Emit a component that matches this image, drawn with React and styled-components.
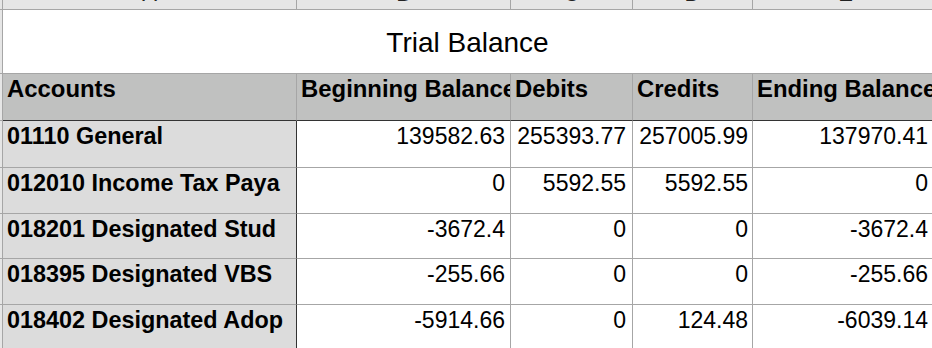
import React from 'react'
import styled, { createGlobalStyle } from 'styled-components'

const GlobalStyle = createGlobalStyle`
  html, body {
    margin: 0;
    padding: 0;
    background: #ffffff;
    overflow: hidden;
  }
  body {
    font-family: "Liberation Sans", Arial, sans-serif;
  }
`

const COLS = '3px 294px 214px 122px 120px 186px'
const GRID = '#a6a6a6'
const DARK = '#333333'

const accounts = [
  { name: '01110 General', begin: '139582.63', debit: '255393.77', credit: '257005.99', end: '137970.41', h: 47 },
  { name: '012010 Income Tax Paya', begin: '0', debit: '5592.55', credit: '5592.55', end: '0', h: 46 },
  { name: '018201 Designated Stud', begin: '-3672.4', debit: '0', credit: '0', end: '-3672.4', h: 45 },
  { name: '018395 Designated VBS', begin: '-255.66', debit: '0', credit: '0', end: '-255.66', h: 46 },
  { name: '018402 Designated Adop', begin: '-5914.66', debit: '0', credit: '124.48', end: '-6039.14', h: 46 },
]

const Sheet = styled.div`
  width: 939px;
  color: #000;
`

const Row = styled.div`
  display: grid;
  grid-template-columns: ${COLS};
  height: ${p => p.$h}px;
  margin-top: ${p => p.$offset || 0}px;
`

const RowHead = styled.div`
  box-sizing: border-box;
  background: #e6e6e6;
  border-right: 1px solid ${GRID};
  border-bottom: 1px solid ${GRID};
`

const Letter = styled.div`
  box-sizing: border-box;
  background: #e6e6e6;
  border-right: 1px solid ${GRID};
  border-bottom: 1px solid ${GRID};
  font-size: 22px;
  line-height: 30px;
  text-align: center;
  color: #222;
`

const TitleCell = styled.div`
  grid-column: 2 / -1;
  box-sizing: border-box;
  border-bottom: 1px solid ${GRID};
  display: flex;
  align-items: center;
  justify-content: center;
  padding: 2px 7px 0 0;
  font-size: 28px;
`

const Cell = styled.div`
  box-sizing: border-box;
  overflow: hidden;
  white-space: nowrap;
  padding: ${p => (p.$bold ? 1.5 : 2)}px ${p => p.$pr || 3}px 0 ${p => p.$pl || 3}px;
  font-size: ${p => (p.$bold ? 23.4 : 23)}px;
  font-weight: ${p => (p.$bold ? 700 : 400)};
  text-align: ${p => (p.$num ? 'right' : 'left')};
  background: ${p => p.$bg || '#ffffff'};
  border-right: 1px solid ${p => (p.$darkRight ? DARK : GRID)};
  border-bottom: 1px solid ${p => (p.$darkBottom ? DARK : GRID)};
`

const HeaderCell = styled(Cell)`
  font-size: 23.9px;
  padding-top: 1px;
`

const letters = ['A', 'B', 'C', 'D', 'E']
const headers = ['Accounts', 'Beginning Balance', 'Debits', 'Credits', 'Ending Balance']
const rightPad = [0, 5, 6, 4, 10]

export default function App() {
  return (
    <>
      <GlobalStyle />
      <Sheet>
        <Row $h={31} $offset={-21}>
          <RowHead />
          {letters.map(l => (
            <Letter key={l}>{l}</Letter>
          ))}
        </Row>

        <Row $h={64}>
          <RowHead />
          <TitleCell>Trial Balance</TitleCell>
        </Row>

        <Row $h={47}>
          <RowHead />
          {headers.map(h => (
            <HeaderCell key={h} $bold $bg="#c0c1c0" $pl={4} $darkBottom>
              {h}
            </HeaderCell>
          ))}
        </Row>

        {accounts.map(a => (
          <Row key={a.name} $h={a.h}>
            <RowHead />
            <Cell $bold $bg="#dcdcdc" $pl={4} $darkRight>
              {a.name}
            </Cell>
            <Cell $num $pr={rightPad[1]}>{a.begin}</Cell>
            <Cell $num $pr={rightPad[2]}>{a.debit}</Cell>
            <Cell $num $pr={rightPad[3]}>{a.credit}</Cell>
            <Cell $num $pr={rightPad[4]}>{a.end}</Cell>
          </Row>
        ))}
      </Sheet>
    </>
  )
}
